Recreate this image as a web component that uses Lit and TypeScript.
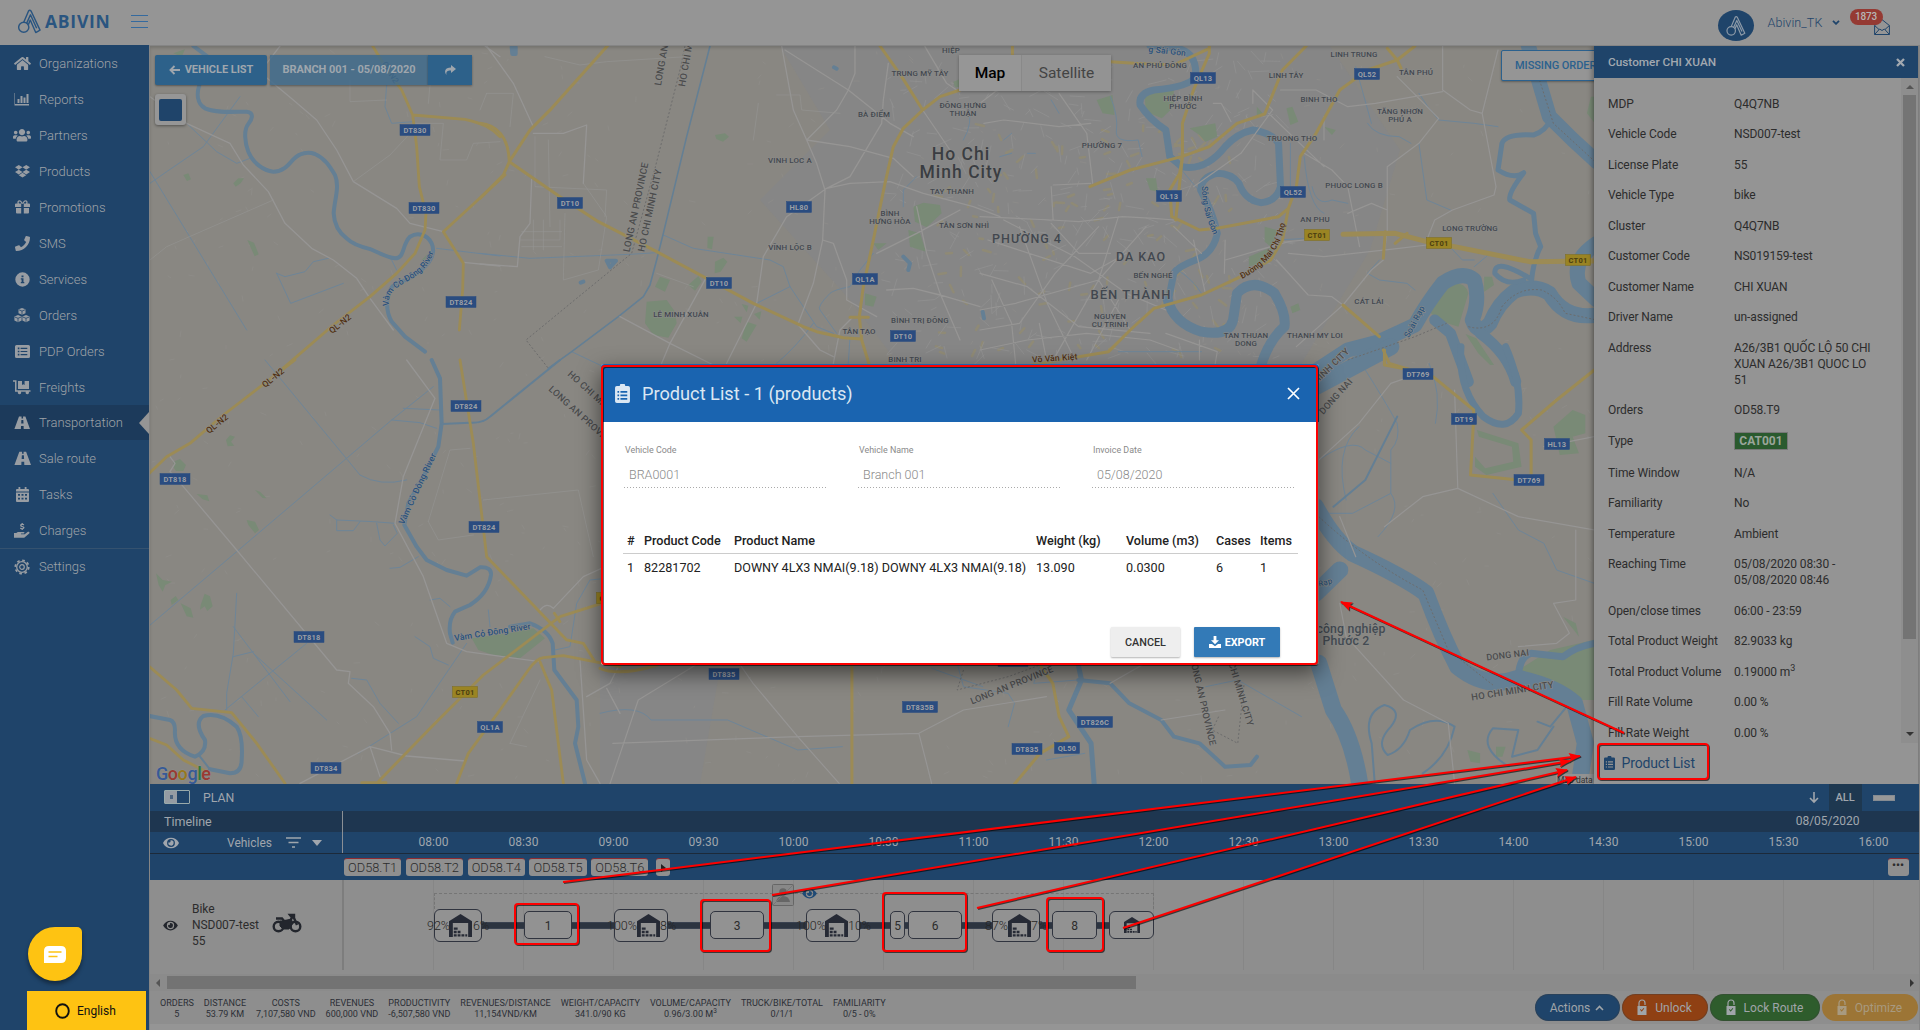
import { LitElement, html, svg, css, TemplateResult } from "lit";
import { customElement } from "lit/decorators.js";

/* ---------- icons ---------- */
const P = {
  home: "M280.37 148.26L96 300.11V464a16 16 0 0 0 16 16l112.06-.29a16 16 0 0 0 15.92-16V368a16 16 0 0 1 16-16h64a16 16 0 0 1 16 16v95.64a16 16 0 0 0 16 16.05L464 480a16 16 0 0 0 16-16V300L295.67 148.26a12.19 12.19 0 0 0-15.3 0zM571.6 251.47L488 182.56V44.05a12 12 0 0 0-12-12h-56a12 12 0 0 0-12 12v72.61L318.47 43a48 48 0 0 0-61 0L4.34 251.47a12 12 0 0 0-1.6 16.9l25.5 31A12 12 0 0 0 45.15 301l235.22-193.74a12.19 12.19 0 0 1 15.3 0L530.9 301a12 12 0 0 0 16.9-1.6l25.5-31a12 12 0 0 0-1.7-16.93z",
  users: "M96 224c35.3 0 64-28.7 64-64s-28.7-64-64-64-64 28.7-64 64 28.7 64 64 64zm448 0c35.3 0 64-28.7 64-64s-28.7-64-64-64-64 28.7-64 64 28.7 64 64 64zm32 32h-64c-17.6 0-33.5 7.1-45.1 18.6 40.3 22.1 68.9 62 75.1 109.4h66c17.7 0 32-14.3 32-32v-32c0-35.3-28.7-64-64-64zm-256 0c61.9 0 112-50.1 112-112S381.9 32 320 32 208 82.1 208 144s50.1 112 112 112zm76.8 32h-8.3c-20.8 10-43.9 16-68.5 16s-47.6-6-68.5-16h-8.3C179.6 288 128 339.6 128 403.2V432c0 26.5 21.5 48 48 48h288c26.5 0 48-21.5 48-48v-28.8c0-63.6-51.6-115.2-115.2-115.2zm-223.7-13.4C161.5 263.1 145.6 256 128 256H64c-35.3 0-64 28.7-64 64v32c0 17.7 14.3 32 32 32h65.9c6.3-47.4 34.9-87.3 75.2-109.4z",
  dropbox: "M264.4 116.3l-132 84.3 132 84.3-132 84.3L0 284.1l132.3-84.3L0 116.3 132.3 32l132.1 84.3zM131.6 395.7l132-84.3 132 84.3-132 84.3-132-84.3zm132.8-111.6l132-84.3-132-83.6L395.7 32 528 116.3l-132.3 84.3L528 284.8l-132.3 84.3-131.3-85z",
  phone: "M493.4 24.6l-104-24c-11.3-2.6-22.9 3.3-27.5 13.9l-48 112c-4.2 9.8-1.4 21.3 6.9 28l60.6 49.6c-36 76.7-98.9 140.5-177.2 177.2l-49.6-60.6c-6.8-8.3-18.2-11.1-28-6.9l-112 48C3.9 366.5-2 378.1.6 389.4l24 104C27.1 504.2 36.7 512 48 512c256.1 0 464-207.5 464-464 0-11.2-7.7-20.9-18.6-23.4z",
  eye: "M572.52 241.4C518.29 135.59 410.93 64 288 64S57.68 135.64 3.48 241.41a32.35 32.35 0 0 0 0 29.19C57.71 376.41 165.07 448 288 448s230.32-71.64 284.52-177.41a32.35 32.35 0 0 0 0-29.19zM288 400a144 144 0 1 1 144-144 143.93 143.93 0 0 1-144 144zm0-240a95.31 95.31 0 0 0-25.31 3.79 47.85 47.85 0 0 1-66.9 66.9A95.78 95.78 0 1 0 288 160z",
};

const pathIcon = (d: string, vb: string, w: number, h: number) =>
  html`<svg width=${w} height=${h} viewBox=${vb} fill="currentColor"><path d=${d} /></svg>`;
const box = (w: number, h: number, vb: string, body: unknown) =>
  html`<svg width=${w} height=${h} viewBox=${vb} fill="currentColor">${body}</svg>`;

const road = svg`<path fill-rule="evenodd" d="M5 2h2.6l-.1 2h1.6L9 2h2.4L16 14.5H9.700L9.600 11.500H7l-.1 3H.400zM7.400 5.500l-.2 3.500h2.300l-.2-3.500z"/>`;
const icons: Record<string, TemplateResult> = {
  home: pathIcon(P.home, "0 0 576 512", 17, 15),
  chart: box(16, 14, "0 0 16 14", svg`<path d="M1 1v11h14v1.500H.500V1zM3.500 7h2v4h-2zM6.500 4h2v7h-2zM9.500 5.500h2V11h-2zM12.500 2h2v9h-2z"/>`),
  users: pathIcon(P.users, "0 0 640 512", 18, 14.4),
  dropbox: pathIcon(P.dropbox, "0 0 528 512", 15, 14.500),
  gift: box(15, 14, "0 0 15 14", svg`<path d="M0 4.500Q0 3.500 1 3.500H2.600C1.800 1.500 3 .2 4.500.3 6 .4 7 2 7.500 3 8 2 9 .4 10.500.3 12 .2 13.200 1.500 12.400 3.500H14q1 0 1 1V7H8.800V3.700H6.200V7H0zM4 3.400h2.500C5.800 2 5 1.500 4.500 1.500 3.500 1.500 3.500 2.800 4 3.400zM8.500 3.400H11c.5-.6.5-1.900-.5-1.900-.5 0-1.300.5-2 1.900zM1 8h5.200v5.500H2q-1 0-1-1zM8.800 8H14v4.500q0 1-1 1H8.800z"/>`),
  phone: pathIcon(P.phone, "0 0 512 512", 15, 15),
  info: box(15, 15, "0 0 15 15", svg`<path fill-rule="evenodd" d="M7.500.3a7.200 7.200 0 1 1 0 14.400 7.200 7.200 0 0 1 0-14.400zM6.500 3.500v1.800h2V3.500zM5.800 6.200v1.200h.8V10h-.8v1.200h3.500V10h-.8V6.200z"/>`),
  boxes: box(16, 15, "0 0 16 15", svg`<path d="M8 0l3.500 1.300v3.900L8 6.700 4.500 5.200V1.300zM4 7.100l3.600 1.400v4L4 14.200.4 12.500v-4zM12 7.100l3.600 1.400v4L12 14.200l-3.600-1.700v-4z"/><path d="M4.800 1.700L8 3.100l3.200-1.400M8 3.100v3.500M.8 9L4 10.300 7.200 9M4 10.300V14M8.800 9l3.200 1.300L15.200 9M12 10.300V14" stroke="#1f446a" stroke-width=".8" fill="none"/>`),
  list: box(15, 13, "0 0 15 13", svg`<path fill-rule="evenodd" d="M1.500 0h12Q15 0 15 1.500v10q0 1.500-1.500 1.500h-12Q0 13 0 11.500v-10Q0 0 1.500 0zM2.800 2.600v1.600h1.600V2.600zM5.600 2.800v1.200h6.700V2.800zM2.800 5.700v1.600h1.600V5.700zM5.600 5.900v1.200h6.700V5.900zM2.800 8.800v1.600h1.600V8.800zM5.600 9v1.200h6.700V9z"/>`),
  dolly: box(18, 15, "0 0 18 15", svg`<path d="M0 .3h3.500v9.900H17.500v1.600h-1.700a1.700 1.700 0 1 1-3 0H8a1.700 1.700 0 1 1-3 0H2V1.800H0zM5 1h4v4l1.300-.8L11.600 5V1H16v8H5z"/>`),
  road1: box(16, 13, "0 1.500 16 13", road),
  road2: box(17, 16, "0 1.500 16 13", road),
  cal: box(13, 15, "0 0 13 15", svg`<path fill-rule="evenodd" d="M2.500 0h1.800v2h4.400V0h1.800v2H12q1 0 1 1v1.500H0V3q0-1 1-1h1.500zM0 5.500h13V14q0 1-1 1H1q-1 0-1-1zM2 7v1.800h2V7zm3.500 0v1.800h2V7zM9 7v1.800h2V7zM2 10.700v1.800h2v-1.800zm3.500 0v1.800h2v-1.800zm3.500 0v1.800h2v-1.800z"/>`),
  hand: box(16, 15, "0 0 16 15", svg`<path d="M7.600 0h1.200v.8c.7.1 1.100.4 1.500.8l-.8.8c-.6-.5-1.900-.6-1.900 0 0 .7 2.900.4 2.900 2.200 0 .8-.7 1.500-1.700 1.700V7H7.600v-.7c-.7-.1-1.400-.5-1.700-.9l.8-.8c.7.7 2.400.7 2.400 0S6.100 4.100 6.100 2.400c0-.8.6-1.400 1.500-1.600zM0 10h2.300l1.500-1.100H9.600c1.200 0 1.200 1.700 0 1.700H7v.6h3.700l2.900-2.200c1.200-.9 2.600.6 1.600 1.500l-4.400 3.700q-.6.500-1.300.5H0z"/>`),
  gear: box(16, 16, "0 0 16 16", svg`<circle cx="8" cy="8" r="5.300" fill="none" stroke="currentColor" stroke-width="1.300"/><circle cx="8" cy="8" r="6.700" fill="none" stroke="currentColor" stroke-width="1.800" stroke-dasharray="2.630 2.630"/><circle cx="8" cy="8" r="2.300" fill="none" stroke="currentColor" stroke-width="1.200"/>`),
  clip: box(11, 14, "0 0 11 14", svg`<path fill-rule="evenodd" d="M3.500 1.500a2 2 0 0 1 4 0H9.700Q11 1.500 11 2.800v9.900Q11 14 9.700 14H1.300Q0 14 0 12.700V2.800Q0 1.500 1.300 1.500zM1.800 5.200v1.200H3V5.200zM4 5.200v1.200h5V5.200zM1.800 7.800V9H3V7.800zM4 7.800V9h5V7.800zM1.800 10.400v1.200H3v-1.200zM4 10.400v1.200h5v-1.200z"/>`),
};

const mark = (c: string, w: number, h: number) => html`<svg width=${w} height=${h} viewBox="0 0 24 25" fill="none" stroke=${c} stroke-width="1.500" stroke-linejoin="round">
  <circle cx="6" cy="18.500" r="5.300"/><path d="M6 13.300L11 1.500q1.200-1.500 2.600 0L23 21.500l-4.500 2.500-5.700-13-2 5M9 14.500L13 5.500l6.500 14"/></svg>`;

/* ---------- shared base ---------- */
const base = css`
  :host { display: block; font-family: Roboto, "Liberation Sans", sans-serif; box-sizing: border-box; }
  *, *::before, *::after { box-sizing: border-box; }
  svg { display: block; flex: none; }
`;

/* ---------- top bar ---------- */
@customElement("top-bar")
class TopBar extends LitElement {
  static styles = [base, css`
    .bar { height: 45px; background: #959595; display: flex; align-items: center; padding: 0 30px 0 18px; color: #27507c; }
    .logo { display: flex; align-items: center; gap: 4px; width: 113px; margin-top: -3px; }
    .name { font: 700 17.500px "Open Sans", sans-serif; letter-spacing: .75px; color: #2a5580; }
    .burger { display: grid; gap: 5px; width: 17px; margin-top: -3px; }
    .burger i { height: 1px; background: #356a9e; }
    .grow { flex: 1; }
    .avatar { width: 36px; height: 31px; border-radius: 50%; background: #1f446a; display: grid; place-items: center; margin: 6px 14px 0 0; }
    .user { font-size: 12.500px; font-weight: 300; color: #1f446a; letter-spacing: .1px; display: flex; align-items: center; justify-content: space-between; width: 72px; margin-right: 10px; }
    .mail { display: grid; width: 41px; height: 26px; }
    .mail > * { grid-area: 1 / 1; }
    .badge { width: 33px; height: 16px; border-radius: 8px; background: #953a33; color: #b5b5b5; font-size: 10px; font-weight: 500; text-align: center; line-height: 16px; letter-spacing: -.2px; margin-top: -1px; z-index: 1; }
    .env { align-self: end; justify-self: end; margin: 0 1px 1px 0; }
  `];
  render() {
    return html`<div class="bar">
      <div class="logo">${mark("#2a5580", 23, 25)}<span class="name">ABIVIN</span></div>
      <div class="burger"><i></i><i></i><i></i></div>
      <div class="grow"></div>
      <div class="avatar">${mark("#8d9aa8", 20, 20)}</div>
      <div class="user">Abivin_TK<svg width="8" height="5" viewBox="0 0 8 5"><path d="M1 .8l3 3 3-3" fill="none" stroke="#1f446a" stroke-width="1.800"/></svg></div>
      <div class="mail"><svg class="env" width="16" height="16" viewBox="0 0 16 16" fill="none" stroke="#1f446a"><path d="M.6 6.500L8 .6l7.400 5.900v9H.6zM.6 6.500L5 10.500M15.400 6.500L11 10.500M.6 15.500l5-5.500 2.400 1.500 2.400-1.500 5 5.500"/></svg><span class="badge">1873</span></div>
    </div>`;
  }
}

/* ---------- side navigation ---------- */
const NAV: [string, string][] = [
  ["home", "Organizations"], ["chart", "Reports"], ["users", "Partners"], ["dropbox", "Products"],
  ["gift", "Promotions"], ["phone", "SMS"], ["info", "Services"], ["boxes", "Orders"], ["list", "PDP Orders"],
  ["dolly", "Freights"], ["road1", "Transportation"], ["road2", "Sale route"], ["cal", "Tasks"], ["hand", "Charges"], ["gear", "Settings"],
];

@customElement("side-nav")
class SideNav extends LitElement {
  static styles = [base, css`
    :host { background: #1f446a; color: #9fa3a8; display: flex; flex-direction: column; }
    .item { height: 36px; display: flex; align-items: center; font-size: 13px; font-weight: 300; }
    .ico { width: 39px; padding-left: 6px; display: grid; place-items: center; padding-right: 1px; color: #989da3; }
    .on { background: #1c3a5b; height: 35px; }
    .on::after { content: ""; margin-left: auto; border: 11px solid transparent; border-left: 0; border-right: 10px solid #959595; }
    .last { border-top: 1px solid #35526f; height: 36px; }
    .grow { flex: 1; }
    .chat { width: 54px; height: 54px; margin: 0 0 10px 28px; background: #fec312; border-radius: 50% 5px 50% 50%; display: grid; place-items: center; box-shadow: 0 3px 4px rgba(0,0,0,.4); }
    .lang { width: 119px; height: 39px; margin-left: 27px; background: #fec312; color: #111; font-size: 12px; display: flex; align-items: center; gap: 7px; padding-left: 28px; }
  `];
  render() {
    return html`${NAV.map(([i, t]) => html`<div class="item ${t === "Transportation" ? "on" : ""} ${t === "Settings" ? "last" : ""}"><span class="ico">${icons[i]}</span>${t}</div>`)}
      <div class="grow"></div>
      <div class="chat"><svg width="22" height="17" viewBox="0 0 22 17"><path d="M5 0h12q5 0 5 5v7q0 5-5 5H0V5q0-5 5-5z" fill="#fff"/><path d="M4.500 6h13M4.500 10.500h9" stroke="#fec312" stroke-width="1.600"/></svg></div>
      <div class="lang"><svg width="15" height="16" viewBox="0 0 15 16"><ellipse cx="7.500" cy="8" rx="6.300" ry="6.800" fill="none" stroke="#111" stroke-width="1.900"/></svg>English</div>`;
  }
}

/* ---------- map ---------- */
type Kind = "w" | "y" | "r" | "s" | "g" | "b";
interface Tile { t: string; p: [Kind, number, string][]; }
/* w = minor road, y = main road, r = water line, s = small stream, g = park area, b = boundary */
const TILES: Tile[] = [
  { t: "scale(.33333)", p: [
    ["s", 1, "M450 550L500 515 610 440 720 290M560 370L650 455 710 490 750 475M450 515L740 990M830 820L855 830 915 815 940 785 985 775M830 820L872 910 1030 850M1310 745L1500 768M1160 255L1155 320 1175 370 1240 365M1170 770L1190 810"],
    ["g", 0, "M550 525l15-5 8 18-12 5zM700 550l15-15 17 0-10 15-15 10zM742 720l20 8 14 35-12 6zM1265 780l25-25 10 15-20 30zM520 160l35-12-10 22z"],
    ["r", 4, "M580 138L650 190M598 255C590 280 590 310 615 325C650 340 700 335 740 335C765 338 755 360 745 372C730 390 735 430 745 455C760 490 790 512 820 515C850 515 865 495 880 478C900 458 925 455 945 462C975 475 990 500 1005 525C1020 560 1003 600 1001 640C1003 680 1020 700 1040 715C1060 735 1090 742 1110 747C1140 760 1160 772 1185 775C1215 775 1205 735 1230 710C1250 698 1280 700 1295 730C1320 790 1225 840 1190 850C1155 870 1155 930 1175 965L1215 1010 1275 1055"],
    ["w", 1.3, "M450 290L560 370 690 430 730 495 805 575 855 670 935 745 1000 780 1070 835 1110 895 1180 990M790 225L880 300 950 360 1010 450 1060 545 1190 625 1230 670 1330 695M1390 787L1500 798M840 138L800 190M1455 138L1500 170"],
    ["w", .6, "M450 780L500 740 820 600M1060 545L1170 465 1240 390M1245 370L1330 370 1320 480 1400 480 1420 430 1500 425M1050 240L1050 305 1160 300M1290 255L1285 310"],
    ["y", 2.8, "M1118 138L1165 215 1205 270 1238 345 1250 440 1258 560 1278 640 1275 690 1245 760 1190 820 1110 890 1000 975 820 1130M1238 345L1395 358C1450 370 1475 385 1500 410M1515 525L1330 695 1390 790 1388 870 1378 990"],
  ] },
  { t: "translate(140 360) scale(.33333)", p: [
    ["g", 0, "M995 835L1015 870 1060 885 1140 895 1215 835 1180 805 1100 820zM100 305l20-8 18 18-8 18-22 0-8-12zM170 402l32 4 6 18-20-6zM345 390l15 5 20 20-12-1zM320 480l25 5 12 25-12 10-20-25zM258 240l12-14 15 4-12 15 10 12-20 2zM182 735l12-34 16 8 8 30-16 14-8-14-14 10zM122 730l30 15 8 28-20-4zM92 720l15-12 8 12-20 15zM48 640l20 20 28 5-20 10-8 20-12-20z"],
    ["s", 1, "M375 0L660 345Q720 380 800 360M28 797L290 575 755 180 880 80M1260 0L1030 185M655 1180L830 1070 980 850M635 955L680 960 720 1030 775 1090M255 1050L500 850M290 700L280 880 260 1000 260 1050M280 800L450 1025M305 1010L355 1070M340 880L560 1080M280 890L340 875M570 465L590 480 700 485 765 490M590 480L590 512 640 512 660 485M710 490L720 540 735 558 772 520 760 495M825 830L870 860 880 895 925 915M750 625L780 622 835 590M870 720L900 715 930 740M1045 750L1050 800M755 180L840 188 890 205M790 145L900 150M1400 655L1350 660 1310 730 1290 860 1245 870"],
    ["r", 4, "M875 0L900 55 905 190 895 260 850 350 805 430 793 495 830 560 860 600 920 630 980 647 1020 622Q1055 620 1053 645Q1045 700 990 735L945 755Q925 780 930 820L938 848M1110 800L1170 790Q1225 810 1238 850L1243 930 1310 1020 1315 1100 1305 1150 1335 1270M28 1068L90 1080Q105 1085 105 1110Q100 1170 165 1190Q200 1175 195 1140Q160 1090 190 1068Q240 1055 290 1100Q310 1130 305 1200Q305 1240 270 1240L210 1228"],
    ["r", 2, "M905 192L990 188Q1030 190 1050 170L1260 0M180 1190L210 1228"],
    ["w", 1.3, "M800 0L885 115 790 350 765 490 850 650 920 850 980 875 1200 905M90 290L105 310 90 335 130 380 290 570 590 930 630 935 625 970 700 1040 750 1120 755 1170M480 1270L690 1160 800 1188 975 1203M690 1160L720 1250M1200 750Q1220 725 1240 745L1330 650 1440 600M1320 900L1340 1200 1380 1270M1340 1010L1410 970 1440 910M1400 985L1440 1060"],
    ["w", .6, "M865 485L930 270 990 265M865 485L895 540 1000 525M1030 420L1315 390 1360 590M1110 1150L1200 960M1110 1150L1160 1160"],
    ["y", 2.8, "M465 0L250 165 150 250 80 290 28 340M960 0L1000 250 1040 590 1160 715 1280 840 1330 850 1365 905M1440 715L1385 730 1260 770 1030 945 880 1095 715 1265M950 1270L985 1180 1080 1050 1165 930Q1190 895 1210 893L1270 887 1390 910 1440 920M1200 905L1235 990 1270 1270M28 920L110 990 155 1045 275 1058 350 1150 435 1270M28 1135L80 1155 130 1200 200 1235M1243 760L1260 785M665 1268H738"],
  ] },
  { t: "translate(480 40) scale(.33333)", p: [
    ["g", 0, "M500 785L560 780 585 815 590 850 565 893 520 885 495 850zM540 710L570 720 555 755 525 740zM625 735L655 708 665 725 645 752zM705 285l30-5 12 10-18 15-20-8zM705 665l25-12 12 12-20 30-18 5zM785 895l15-50 30 10-30 50zM762 830l25 0-5 20zM785 792l20 5-5 20zM822 822l22-8-5 25zM683 590l18 0-5 38-14-4zM1300 500L1330 488 1380 495 1385 520 1340 562 1305 545zM1285 570L1320 580 1338 635 1290 620zM1155 760l35 10-10 30-25-5zM1420 125l20-8 0 25-15 0zM1180 610l40 0-25 20z"],
    ["s", 1, "M0 640L150 655 450 643 530 638M550 585L640 625 870 660 910 680 930 740 1010 860 1060 880M830 790L930 740M275 935L370 980M1180 640L1140 690 1110 740Q1060 750 1050 760Q1010 800 1020 810L1070 880M1000 850Q950 920 890 970M1270 500L1270 450 1310 410M1465 200Q1480 250 1450 300M1110 890L1105 970"],
    ["r", 1.600, "M690 18L620 290 550 580 530 660 510 735 490 770 415 830 275 935 205 985"],
    ["r", 4, "M95 22h12v20h-10zM380 662l28 0-18 20zM1270 650l20 20-5 20M1508 815l4 20M1062 82l8 4M302 728l8-3"],
    ["b", 1, "M615 18L600 90 525 385 455 640 290 775 138 900 205 985"],
    ["w", 1.300, "M905 18L940 210 980 300 1010 370 1035 450 1028 600 1000 730 955 850M1125 18L1125 100 1105 150 1070 210 980 300M915 30L1105 150 1230 250 1300 290M980 300L1110 320 1240 355 1300 410M1040 445L1110 430 1230 425 1330 460 1480 500 1560 530M1040 445L920 530 850 650 830 790 740 970M1225 70L1210 180 1205 250 1110 410 1040 445M1028 600L1060 610 1100 720 1100 780 1190 830M1328 210L1410 330M1335 20L1400 130 1430 150M1190 640L1310 580 1440 510M1310 500L1340 640 1380 760 1440 900M680 710L570 910 545 970M420 830L570 910 700 975M1220 750L1300 745 1380 765 1500 800M1115 835L1080 870 1060 970M20 18L100 130 160 260M160 280L250 280 320 255 310 430M155 415L150 550 120 590 112 680 0 672M955 855L1020 930 1060 950"],
    ["w", .6, "M165 290L165 440 380 450 375 530M205 300L210 560M120 600H240V540M125 575H245M125 620H245M160 540V630M190 540V630M310 430L380 530 355 690 250 720 255 520M835 190L820 300M890 165L960 165 965 210 1080 220M20 160L100 160 90 260M0 210L20 160M195 50L300 75 380 65 620 50M530 700L640 740"],
    ["y", 3, "M382 18L215 205 150 270 88 365 70 405 0 475M88 365L240 470 355 545 530 635 820 790 970 860 1010 875 1090 893 1145 897M0 250C50 255 85 290 88 365M1200 18L1265 110 1328 210M1440 150L1380 170 1328 210 1270 265 1240 320 1215 430 1180 600 1150 740 1138 830 1145 900 1168 975M1110 832H1165"],
  ] },
  { t: "translate(980 40) scale(.39541 .33333)", p: [
    ["g", 0, "M415 160L490 150 490 200 460 235 420 215zM295 180l40-15 5 60-30-5zM530 265l65-15 5 40-30 15-15-20zM775 205l15-5 15 45-20 10zM700 200l15 20-15 15zM870 260l30 10-10 15zM720 560l30 10-10 55-20-20zM680 650l60-30-10 40-50 20zM785 800l20-10 5 20-20 10zM420 415l25 0 5 40-20-5zM1275 710l20 0 5 25-25 20zM1545 170l10 0 0 80-20-30z"],
    ["s", 1, "M330 170Q350 230 345 270T400 300L410 350M1110 160Q1130 200 1160 240L1250 250 1310 260M980 250Q1000 290 1060 290L1090 310M1110 310L1130 480 1190 510M840 440Q850 500 890 480L930 490M750 600L830 595M1010 660L980 700 1010 720 1080 730 1100 750M1250 680L1290 640M510 390L560 460M785 310V440M350 935H560M1180 610L1220 660 1250 660M820 350Q830 500 870 520M500 690Q540 720 560 760M950 80L990 250M180 180L200 220M60 300l20-20M50 350l30-10M120 340l20 0"],
    ["r", 7, "M430 16L500 25Q550 40 545 110Q530 140 440 150Q400 160 405 195Q430 240 470 270L480 350 510 380Q570 395 620 320Q650 280 690 270Q740 280 755 310L760 440Q750 485 710 488Q670 480 655 430Q635 400 600 400Q560 410 558 450Q590 520 600 580Q590 640 545 660Q500 680 490 700L475 790"],
    ["r", 10, "M475 780Q490 850 560 875Q630 890 640 840L650 760Q690 710 745 760Q775 820 770 860Q730 900 710 980"],
    ["r", 15, "M840 1000L930 930 1010 905 1100 855Q1130 790 1170 730Q1220 690 1250 720Q1265 780 1245 840Q1260 890 1290 850Q1310 790 1350 755Q1400 730 1440 760Q1480 840 1560 825M1385 10L1410 110 1440 230 1500 300 1560 365M1560 610Q1495 660 1515 730L1560 780"],
    ["r", 11, "M1150 840L1190 880 1235 1025M1265 880Q1335 940 1355 1025"],
    ["r", 5, "M1445 235Q1430 275 1400 285Q1330 280 1320 310L1310 390Q1350 420 1375 398Q1335 460 1340 480L1400 520 1405 580 1418 620Q1400 660 1395 720M1395 718Q1300 650 1302 700Q1330 740 1375 720"],
    ["g", 0, "M1140 820L1160 770 1190 730Q1228 725 1235 760L1210 860Q1170 850 1140 820zM1228 882L1255 895 1300 975 1290 975 1260 940z"],
    ["b", 1, "M930 960L1100 890 1180 850M1235 860Q1300 880 1320 800 1360 740 1420 750 1460 770 1480 820L1560 840M1415 120L1450 250 1560 370"],
    ["w", 1.200, "M0 530L180 540 250 545 360 530 440 535 490 540M60 240L200 260 280 250M200 160L270 280 285 430M180 440L185 540M590 190L610 190 635 245M740 210L690 150 690 190M760 150L850 150 930 200 1000 190 1170 155M1055 110L1160 235 1110 310 1030 380 1030 570 1020 660 990 690 918 795 800 920M780 640L870 650 1060 625 1130 615M620 660L780 605 820 600M750 660L830 765 890 770 918 795M1130 600L1150 540 1195 510 1300 465 1305 440 1270 220 1310 30M1170 18L1170 150 1240 210 1270 220M820 340L890 390 930 440 960 620M1030 510L990 490 930 520M540 600L570 760M620 600L618 700M540 440L660 340 740 210M0 190L110 90M10 250L60 240M20 600L150 650 280 700 370 640M280 430L185 435M350 530L300 720 190 950M100 560L170 790 240 960M0 810L90 790 300 720 330 680 420 560M0 700L120 740 250 860 430 880M60 540L240 650 370 760 470 810M0 930L120 900 270 880 430 900M180 550L250 640 330 640M300 720L380 870M0 870L100 850 190 700 300 560M90 970L80 850 30 720M170 970L150 850M430 900L500 930M470 880L600 935 595 970M555 900V960M350 780L270 960M490 560L560 640M730 220L870 380M870 230L870 300"],
    ["y", 3, "M580 16L580 40 540 150 512 250 512 350 505 400 480 450 485 530 555 570 600 565 755 530 780 505 800 440 810 350 850 280 910 150 980 90 1055 60 1100 18M278 440L380 390 510 350 580 320 650 250 720 222 765 90 825 18M330 65L390 70 490 75 580 25M1030 25L1055 60 1065 85M512 350L495 540M780 505L765 600 735 660 650 715 560 765 440 805 380 870 325 935 250 950 130 975M918 795L1010 890M1020 930L1035 970 1090 990M1025 575L1020 655M1050 610L1080 580M82 18V50"],
    ["y", 5, "M918 583L1050 580 1130 605 1200 620 1390 665 1560 663"],
  ] },
  { t: "translate(600 350) scale(.63776 .33333)", p: [
    ["g", 0, "M1440 960L1490 900 1559 870 1559 1050 1530 1050 1500 1010zM1375 240L1440 280 1445 350 1390 375 1372 350 1372 320 1388 355 1432 335 1430 290 1378 260zM1495 230l30-50 20 15 0 55-20 10 10 50-30 5zM1510 800l20 20 5 40-8-20zM1360 1200l20 10 0 30-15-5zM1405 1190l15 0-5 30-10 0z"],
    ["s", 1, "M0 1090Q60 1060 80 1110L200 1110 310 1200 380 1190M560 940L570 1010 640 1030 650 1060 640 1130M520 955L600 1010M690 945L680 1000 750 990M1127 330Q1180 260 1200 300L1240 340M1200 60Q1230 150 1250 220Q1255 270 1240 300L1240 430 1180 490 1130 490M1240 430Q1260 480 1220 560M1300 40Q1320 130 1310 220M1190 230Q1150 300 1170 450M1559 700L1500 660 1480 580 1440 540 1400 430M950 1010L1000 990 1100 1100M760 1210L700 1230"],
    ["r", 2, "M1215 1305L1210 1180Q1195 1090 1230 1065 1260 1080 1240 1130 1215 1180 1235 1215 1260 1200 1270 1140 1310 1090 1340 1130 1330 1220 1290 1270M1520 1060L1490 1130 1470 1115M1425 1250Q1375 1190 1400 1135L1440 1140 1430 1220 1470 1200 1495 1130M1250 200L1200 390 1150 470"],
    ["r", 5, "M750 945L755 990 735 1080 770 1180 775 1305"],
    ["r", 4, "M750 990L800 1000 830 1060 880 1110 900 1160 940 1180 980 1250 1020 1245 1030 1220"],
    ["r", 7, "M1350 -10Q1345 120 1385 200Q1420 250 1440 190Q1445 100 1420 -10M1440 990Q1440 920 1460 910L1510 920Q1530 890 1559 880"],
    ["r", 17, "M1122 470Q1150 570 1180 610Q1260 680 1295 730Q1320 860 1345 950Q1390 1020 1440 985Q1500 1010 1528 1060L1545 1180 1535 1310M1122 730L1160 660M1127 940L1150 1080Q1180 1160 1192 1310M1240 -10L1122 110"],
    ["b", 1, "M1127 500Q1200 630 1290 720L1330 900 1400 1005M570 960L560 1020 640 980 690 945M970 1100L960 1140 1000 1180 1010 1000"],
    ["w", 1.200, "M15 1305L60 1050 150 945M310 1160L20 1180M310 1160L375 1300M310 1160L500 1150 570 1080 700 1040M220 945L240 1000 310 1160M1127 330L1190 220 1240 100 1300 60M1160 500L1185 620M1160 760L1170 860 1260 1050 1330 1120 1340 1300M1230 530L1290 440 1345 415 1440 500 1559 540M1340 120L1345 415M1530 540L1530 750 1495 760 1520 850 1500 880 1440 890M1480 290L1559 260M500 1150L520 1300M800 1000L850 945M880 1110L980 1080"],
    ["y", 3, "M1230 0L1230 45 1300 70 1370 180 1370 200 1365 375 1440 390 1460 375 1460 270 1445 240 1500 150 1559 60M395 945V1302M0 955Q30 980 90 945M690 945L710 1000 720 1100 735 1160 690 1210 650 1302"],
  ] },
];

type Label = [number, number, string, number?, number?, string?, string?];
const LABELS: Label[] = [
  [951, 53, "HIỆP"], [920, 76, "TRUNG MỸ TÂY"], [874, 117, "BÀ ĐIỂM"], [963, 108, "ĐÔNG HƯNG"], [963, 116, "THUẬN"],
  [790, 163, "VINH LOC A"], [961, 160, "Ho Chi", 17.5, 0, "#3a3d42"], [961, 177.5, "Minh City", 17.5, 0, "#3a3d42"], [952, 194, "TAY THANH"],
  [890, 216, "BÌNH"], [890, 224, "HƯNG HÒA"], [964, 228, "TÂN SƠN NHÌ"], [790, 250, "VĨNH LỘC B"], [681, 317, "LÊ MINH XUÂN"],
  [920, 323, "BÌNH TRỊ ĐÔNG"], [859, 334, "TÂN TẠO"], [905, 362, "BINH TRI"], [1160, 68, "AN PHÚ ĐÔNG"], [1354, 57, "LINH TRUNG"],
  [1286, 78, "LINH TÂY"], [1416, 75, "TÂN PHÚ"], [1183, 101, "HIỆP BÌNH"], [1183, 109, "PHƯỚC"], [1319, 102, "BINH THO"],
  [1400, 114, "TĂNG NHƠN"], [1400, 122, "PHÚ A"], [1102, 148, "PHƯỜNG 7"], [1292, 141, "TRUONG THO"], [1354, 188, "PHUOC LONG B"],
  [1315, 222, "AN PHU"], [1470, 231, "LONG TRƯỜNG"], [1027, 243, "PHƯỜNG 4", 12.5], [1141, 261, "DA KAO", 12.5], [1153, 278, "BẾN NGHÉ"],
  [1131, 299, "BẾN THÀNH", 13], [1110, 319, "NGUYEN"], [1110, 327, "CU TRINH"], [1369, 304, "CÁT LÁI"], [1246, 338, "TAN THUAN"],
  [1246, 346, "DONG"], [1315, 338, "THANH MY LOI"], [1508, 658, "DONG NAI", 9, -7, "#4c4c4c"], [1513, 694, "HO CHI MINH CITY", 9.5, -9, "#4c4c4c"],
  [1013, 688, "LONG AN PROVINCE", 9.3, -22, "#4c4c4c"], [1200, 703, "LONG AN PROVINCE", 9.3, 77, "#4c4c4c"],
  [1238, 695, "CHI MINH CITY", 9.3, 73, "#4c4c4c"], [1351, 633, "công nghiệp", 12.3, 0, "#444b52"], [1346, 645, "Phước 2", 12.3, 0, "#444b52"],
  [1326, 585, "Rạp", 8, -15, "#2d567e"], [639, 208, "LONG AN PROVINCE", 9.6, -78, "#4c4c4c"], [653, 211, "HO CHI MINH CITY", 9.6, -78, "#4c4c4c"],
  [567, 375, "HO CHI MINH CITY", 9.5, 42, "#4c4c4c", "start"], [548, 390, "LONG AN PROVINCE", 9.5, 42, "#4c4c4c", "start"],
  [661, 86, "LONG AN", 9.6, -80, "#4c4c4c", "start"], [685, 87, "HO CHI M", 9.6, -80, "#4c4c4c", "start"],
  [1350, 352, "HO CHI MINH CITY", 9.3, -44, "#4c4c4c", "end"], [1353, 382, "DONG NAI", 9.3, -48, "#4c4c4c", "end"],
  [420, 490, "Vàm Cỏ Đông River", 8.7, -65, "#28517e"], [493, 635, "Vàm Cỏ Đông River", 8.7, -9, "#28517e"],
  [1417, 323, "Soài Rạp", 8.5, -62, "#2d567e"], [1167, 54, "g Sài Gòn", 8.5, 6, "#28517e"],
  [342, 326, "QL-N2", 8.7, -39, "#513010"], [275, 380, "QL-N2", 8.7, -39, "#513010"], [219, 426, "QL-N2", 8.7, -39, "#513010"],
  [388, 74, "QL N2", 8.5, 58, "#4a5560"], [1055, 361, "Võ Văn Kiệt", 8.5, -4, "#513010"],
];
type Shield = [number, number, string, boolean?];
const SHIELDS: Shield[] = [
  [570, 203, "DT10"], [719, 283, "DT10"], [799, 207, "HL80"], [865, 279, "QL1A"], [903, 336, "DT10"], [1203, 78, "QL13"], [1169, 196, "QL13"],
  [1367, 74, "QL52"], [1293, 192, "QL52"], [1418, 374, "DT769"], [1317, 235, "CT01", true], [1439, 243, "CT01", true], [1578, 260, "CT01", true],
  [1464, 419, "DT19"], [1557, 444, "HL13"], [1529, 480, "DT769"], [724, 674, "DT835"], [920, 707, "DT835B"], [1095, 722, "DT826C"],
  [1027, 749, "DT835"], [1067, 748, "QL50"], [175, 479, "DT818"], [466, 406, "DT824"], [484, 527, "DT824"], [309, 637, "DT818"],
  [465, 692, "CT01", true], [490, 727, "QL1A"], [326, 768, "DT834"], [415, 130, "DT830"], [424, 208, "DT830"], [461, 302, "DT824"], [609, 598, "CT01", true], [1013, 661, "DT826"],
];

/* Scattered side streets; the seed keeps every render identical. */
const streets = (() => {
  let s = 77;
  const r = () => ((s = (s * 16807) % 2147483647) / 2147483647);
  let town = "", rural = "", amber = "";
  for (let i = 0; i < 330; i++) {
    const x = 890 + r() * 390, y = 60 + r() * 300, a = r() * 6.28, l = 5 + r() * 14;
    town += `M${x.toFixed(0)} ${y.toFixed(0)}l${(Math.cos(a) * l).toFixed(1)} ${(Math.sin(a) * l).toFixed(1)}`;
  }
  for (let i = 0; i < 650; i++) {
    const x = 150 + r() * 1440, y = 50 + r() * 730, a = r() * 6.28, l = 2 + r() * 4;
    rural += `M${x.toFixed(0)} ${y.toFixed(0)}l${(Math.cos(a) * l).toFixed(1)} ${(Math.sin(a) * l).toFixed(1)}`;
  }
  for (let i = 0; i < 120; i++) {
    const x = 940 + r() * 290, y = 120 + r() * 235, a = r() * 6.28, l = 3 + r() * 6;
    amber += `M${x.toFixed(0)} ${y.toFixed(0)}l${(Math.cos(a) * l).toFixed(1)} ${(Math.sin(a) * l).toFixed(1)}`;
  }
  return { town, rural, amber };
})();

@customElement("city-map")
class CityMap extends LitElement {
  static styles = [base, css`
    :host { background: #898782; overflow: hidden; }
    path { fill: none; vector-effect: non-scaling-stroke; stroke-linejoin: round; stroke-linecap: round; }
    .w { stroke: #969594; }
    .y { stroke: #9c8b55; }
    .r { stroke: #647f94; }
    .s { stroke: #6e8598; }
    .g { fill: #798a76; stroke: none; }
    .b { stroke: #6c6c6c; stroke-dasharray: 2 2; stroke-linecap: butt; }
    .urban { fill: #868686; }
    .street { stroke: #929292; stroke-width: .7; }
    .lane { stroke: #908f8b; stroke-width: .6; }
    .amber { stroke: #8f8a76; stroke-width: 2.5; }
    .lbl { font-weight: 500; paint-order: stroke; stroke: #8b8b89; stroke-width: 1.2px; }
    .tag { font-size: 7.5px; font-weight: 700; letter-spacing: .2px; fill: #9c9fa4; }
    .dark { fill: #4a3e10; }
    .logo { font-size: 18px; font-weight: 500; stroke: #8f8f8f; stroke-width: .8px; paint-order: stroke; }
  `];
  render() {
    const order: Kind[] = ["g", "s", "r", "b", "w", "y"];
    return html`<svg width="1444" height="738" viewBox="150 46 1444 738">
      <path class="urban" d="M780 46H1330L1400 150 1370 250 1300 366H900L850 300 760 200 830 130zM600 668H720L700 784H600z"/>
      <path class="lane" d=${streets.rural}/><path class="amber" d=${streets.amber}/><path class="street" d=${streets.town}/>
      ${order.map(k => TILES.map(t => svg`<g transform=${t.t}>${t.p.filter(p => p[0] === k).map(p => svg`<path class=${k} stroke-width=${p[1]} d=${p[2]}/>`)}</g>`))}
      ${LABELS.map(([x, y, t, size = 7.9, rot = 0, fill = "#42474f", anchor = "middle"]) =>
        svg`<text class="lbl" transform="translate(${x} ${y}) rotate(${rot})" font-size=${size} fill=${fill} text-anchor=${anchor} letter-spacing=${size > 10 && fill !== "#444b52" ? 1 : .15}>${t}</text>`)}
      <path id="va" d="M389 306C386 278 425 288 435 248"/><path id="mct" d="M1242 279Q1282 258 1286 218"/><path id="ssg" d="M1202 186Q1201 210 1215 238"/>
      <text class="lbl" font-size="8.5" fill="#28517e"><textPath href="#va">Vàm Cỏ Đông River</textPath></text>
      <text class="lbl" font-size="8.5" fill="#513010"><textPath href="#mct">Đường Mai Chí Thọ</textPath></text>
      <text class="lbl" font-size="8.5" fill="#28517e"><textPath href="#ssg">Sông Sài Gòn</textPath></text>
      ${SHIELDS.map(([x, y, t, amber]) => {
        const w = t.length * 5 + 5;
        return svg`<rect x=${x - w / 2} y=${y - 5.5} width=${w} height="11" fill=${amber ? "#9a8423" : "#2a4c80"} stroke=${amber ? "#7d6c20" : "#2a4c80"} stroke-width=".5"/><text class="tag ${amber ? "dark" : ""}" x=${x} y=${y + 2.800} text-anchor="middle">${t}</text>`;
      })}
      <text class="logo" x="156" y="780" textLength="55"><tspan fill="#365a97">G</tspan><tspan fill="#9a3a32">o</tspan><tspan fill="#98781c">o</tspan><tspan fill="#365a97">g</tspan><tspan fill="#2d7a40">l</tspan><tspan fill="#9a3a32">e</tspan></text>
      <rect x="1556" y="774" width="38" height="10" fill="#929292"/><text x="1557" y="783" font-size="8.500" fill="#333">Map data</text>
    </svg>`;
  }
}

/* ---------- customer panel ---------- */
const INFO: [string, unknown][] = [
  ["MDP", "Q4Q7NB"], ["Vehicle Code", "NSD007-test"], ["License Plate", "55"], ["Vehicle Type", "bike"], ["Cluster", "Q4Q7NB"],
  ["Customer Code", "NS019159-test"], ["Customer Name", "CHI XUAN"], ["Driver Name", "un-assigned"],
  ["Address", html`A26/3B1 QUỐC LỘ 50 CHI<br>XUAN A26/3B1 QUOC LO<br>51`], ["Orders", "OD58.T9"], ["Type", html`<b class="cat">CAT001</b>`],
  ["Time Window", "N/A"], ["Familiarity", "No"], ["Temperature", "Ambient"], ["Reaching Time", html`05/08/2020 08:30 -<br>05/08/2020 08:46`],
  ["Open/close times", "06:00 - 23:59"], ["Total Product Weight", "82.9033 kg"], ["Total Product Volume", html`0.19000 m<sup>3</sup>`],
  ["Fill Rate Volume", "0.00 %"], ["Fill Rate Weight", "0.00 %"],
];

@customElement("customer-panel")
class CustomerPanel extends LitElement {
  static styles = [base, css`
    :host { background: #949494; display: flex; flex-direction: column; box-shadow: -2px 0 5px rgba(0,0,0,.3); z-index: 1; }
    .head { height: 32px; flex: none; background: #1f446a; color: #a3a9b0; display: flex; align-items: center; justify-content: space-between; padding: 0 13px 0 14px; font-size: 11.800px; font-weight: 500; }
    .body { height: 665px; display: flex; overflow: hidden; }
    .rows { flex: 1; padding-top: 10.600px; color: #2c2c2c; font-size: 12px; letter-spacing: -.1px; line-height: 16px; overflow: hidden; }
    .row { display: grid; grid-template-columns: 126px 1fr; padding: 7.250px 0 7.250px 14px; }
    sup { font-size: 9px; line-height: 0; }
    .cat { display: block; width: 54px; height: 18px; margin: -.5px 0 0; background: #2a5a2e; border: 1px solid #777; color: #9aa59a; font-size: 12px; text-align: center; line-height: 17px; letter-spacing: 0; }
    .bar { width: 17px; background: #8e8e8e; display: flex; flex-direction: column; align-items: center; }
    .up { border: 4px solid transparent; border-top: 0; border-bottom-color: #555; margin: 7px 0 6px; }
    .thumb { width: 13px; height: 544px; background: #747474; }
    .down { border: 4px solid transparent; border-bottom: 0; border-top-color: #333; margin-top: auto; margin-bottom: 7px; }
    .foot { flex: 1; display: flex; align-items: center; gap: 7px; padding: 0 0 2px 9.500px; color: #1f446a; font-size: 14px; letter-spacing: -.15px; }
  `];
  render() {
    return html`<div class="head">Customer CHI XUAN<svg width="9" height="9" viewBox="0 0 9 9"><path d="M1 1l7 7M8 1L1 8" stroke="#a3a9b0" stroke-width="2.300"/></svg></div>
      <div class="body"><div class="rows">${INFO.map(([k, v]) => html`<div class="row"><span>${k}</span><span>${v}</span></div>`)}</div>
      <div class="bar"><i class="up"></i><i class="thumb"></i><i class="down"></i></div></div>
      <div class="foot">${icons.clip}<span>Product List</span></div>`;
  }
}

/* ---------- timeline ---------- */
const warehouse = (w: number) => html`<svg width=${w} height=${w} viewBox="0 0 24 24"><path d="M0 7.500L12 0l12 7.500V24h-4V9.500H4V24H0z" fill="#262a35"/><path d="M5 14h4v2.500h-4zM5 17.500h3v2.500h-3zM9 17.500h3v2.500H9zM5 21h3v2.500H5zM9 21h3v2.500H9zM13 21h3v2.500h-3zM17 21h2v2.500h-2z" fill="#262a35"/></svg>`;
const STOPS: { x: number; w: number; n?: string; l?: [number, string]; r?: [number, string]; ix?: number; end?: boolean }[] = [
  { x: 434, w: 48, ix: 449, l: [427, "92%"], r: [473, "6%"] }, { x: 524, w: 48, n: "1" },
  { x: 614, w: 54, ix: 637, l: [607, "100%"], r: [660, "8%"] }, { x: 710, w: 54, n: "3" },
  { x: 806, w: 54, ix: 825, l: [796, "100%"], r: [848, "10%"] }, { x: 890, w: 15, n: "5" }, { x: 908, w: 54, n: "6" },
  { x: 992, w: 48, ix: 1008, l: [985, "87%"], r: [1031, "7%"] }, { x: 1052, w: 45, n: "8" }, { x: 1109, w: 45, ix: 1124, end: true },
];
const HOURS = ["08:00", "08:30", "09:00", "09:30", "10:00", "10:30", "11:00", "11:30", "12:00", "12:30", "13:00", "13:30", "14:00", "14:30", "15:00", "15:30", "16:00"];
const STATS: [string, unknown][] = [
  ["ORDERS", "5"], ["DISTANCE", "53.79 KM"], ["COSTS", "7,107,580 VND"], ["REVENUES", "600,000 VND"], ["PRODUCTIVITY", "-6,507,580 VND"],
  ["REVENUES/DISTANCE", "11,154VND/KM"], ["WEIGHT/CAPACITY", "341.0/90 KG"], ["VOLUME/CAPACITY", html`0.96/3.00 M<sup>3</sup>`], ["TRUCK/BIKE/TOTAL", "0/1/1"], ["FAMILIARITY", "0/5 - 0%"],
];
const lock = html`<svg width="10" height="17" viewBox="0 0 10 17"><path d="M2 7V4a3 3 0 0 1 6 0v2" fill="none" stroke="currentColor" stroke-width="1.200"/><path fill-rule="evenodd" d="M.5 7h9v9h-9zM3 10.800l1.700 2 2.600-3.300-.8-.5-1.800 2.300-1-1.200z" fill="currentColor"/></svg>`;

@customElement("plan-board")
class PlanBoard extends LitElement {
  static styles = [base, css`
    :host { background: #8e8e8e; color: #a0a6ad; display: flex; flex-direction: column; font-size: 12px; }
    .plan { height: 27px; background: #1f446a; display: flex; align-items: center; padding-left: 14px; font-size: 12.300px; flex: none; }
    .switch { width: 26px; height: 14px; border: 1px solid #9aa; border-radius: 1px; background: linear-gradient(90deg, #959ca3 52%, #1f446a 52%); display: flex; align-items: center; padding-left: 5px; margin: -2px 13px 0 0; }
    .switch i { width: 3px; height: 4px; background: #4a6480; }
    .all { margin-left: 9px; width: 33px; height: 27px; background: #1e3850; display: grid; place-items: center; font-size: 11px; font-weight: 500; }
    .min { width: 22px; height: 6px; background: #989898; border: 1px solid #858b92; margin: 0 24px 0 11px; }
    .grow { flex: 1; }
    .date { height: 21px; background: #1e3650; display: grid; grid-template-columns: 192px 1fr; align-items: center; flex: none; }
    .date > span { padding-left: 14px; font-size: 12.500px; }
    .day { border-left: 1px solid #8a8f95; height: 21px; line-height: 20px; text-align: right; padding-right: 59px; }
    .hours { height: 22px; background: #1f446a; border-bottom: 1px solid #1c2a3a; display: grid; grid-template-columns: 192px 1fr; flex: none; }
    .left { display: flex; align-items: center; padding-left: 13px; }
    .veh { margin: 0 14px 0 48px; }
    .caret { border: 5px solid transparent; border-top: 6px solid #a0a6ad; border-bottom: 0; margin-left: 11px; }
    .ticks { display: flex; padding-left: 45.500px; border-left: 1px solid #8a8f95; }
    .ticks span { width: 90px; text-align: center; line-height: 21px; flex: none; }
    .chips { height: 26px; background: #1f446a; display: flex; align-items: center; gap: 4.500px; padding: 0 10px 0 194px; flex: none; }
    .chip { height: 18px; width: 57.300px; border-radius: 3px; background: #8f8f8f; border-top: 1px solid #8e2b31; color: #2c2c2c; font-size: 12.800px; font-weight: 300; line-height: 17px; text-align: center; }
    .next { width: 14px; margin-left: 3.500px; display: grid; place-items: center; }
    .next i { border: 4px solid transparent; border-left: 5px solid #222; border-right: 0; }
    .more { width: 21px; font-weight: 700; font-size: 11px; letter-spacing: 0; line-height: 14px; }
    .lane { position: relative; height: 90px; flex: none; }
    .lane > * { position: absolute; }
    .meta { left: 42px; top: 21px; line-height: 16px; color: #2c2c2c; letter-spacing: -.05px; }
    .eye { left: 13px; top: 39px; color: #23262d; }
    .moto { left: 122px; top: 33px; }
    .col { left: 192px; top: 0; width: 2px; height: 90px; background: #7d7d7d; }
    .grid { left: 283px; top: 0; width: 1441px; height: 90px; background: repeating-linear-gradient(90deg, #868686 0 1px, transparent 1px 90px); }
    .dash { left: 284px; top: 13px; width: 720px; height: 16px; border: 1px dashed #757575; border-bottom: 0; }
    .line { left: 310px; top: 42px; width: 680px; height: 7px; background: #2c3440; border: 1px solid #39414f; }
    .stop { top: 29px; height: 33px; border: 1px solid #30343f; border-radius: 6px; background: #929292; }
    .num { top: 31px; height: 28px; border-radius: 5px; color: #2c2c2c; text-align: center; line-height: 28px; }
    .end { top: 31px; height: 28px; }
    .pct { top: 38px; line-height: 15px; font-size: 12.500px; font-weight: 300; color: #262626; }
    .wh { top: 34px; }
    .whs { top: 37px; }
    .scroll { height: 17px; margin-top: 4px; display: flex; align-items: center; padding: 0 5px 0 6px; flex: none; background: #8b8b8b; }
    .thumb { height: 13px; width: 969px; background: #737373; margin-left: 7px; }
    .la { border: 4px solid transparent; border-right-color: #555; border-left: 0; }
    .ra { border: 4px solid transparent; border-left-color: #333; border-right: 0; margin-left: auto; }
    .foot { height: 33px; display: flex; align-items: center; padding: 0 1px 0 10px; flex: none; }
    .stats { display: flex; gap: 10px; color: #2c2e36; font-size: 9.050px; line-height: 11px; text-align: center; padding-top: 2px; }
    sup { font-size: 6.500px; line-height: 0; }
    .btns { margin-left: auto; display: flex; gap: 2px; }
    .btn { height: 27px; border-radius: 14px; display: flex; align-items: center; justify-content: center; gap: 8px; font-size: 12px; font-weight: 400; color: #a0a5a9; box-shadow: 0 0 0 1px rgba(60,60,60,.35) inset; }
    .b0 { width: 85px; background: #1f446a; gap: 5px; } .b1 { width: 86px; background: #8f4013; } .b2 { width: 110px; background: #2e5c2c; } .b3 { width: 96px; background: #9c7536; color: #a89a80; box-shadow: none; }
    .tail { flex: 1; background: #959595; }
    .person { left: 622px; top: 4px; } .beye { left: 652px; top: 7px; color: #1f4a75; }
  `];
  render() {
    const at = (x: number) => `left:${x - 150}px`;
    return html`
      <div class="plan"><span class="switch"><i></i></span>PLAN<span class="grow"></span>
        <svg width="12" height="13" viewBox="0 0 12 13"><path d="M6 1v10M2 7l4 4 4-4" fill="none" stroke="#a0a6ad" stroke-width="1.600"/></svg><span class="all">ALL</span><i class="min"></i></div>
      <div class="date"><span>Timeline</span><div class="day">08/05/2020</div></div>
      <div class="hours"><div class="left">${pathIcon(P.eye, "0 0 576 512", 16, 14)}<span class="veh">Vehicles</span>
        <svg width="15" height="11" viewBox="0 0 15 11"><path d="M0 1h15M2.500 5.500h10M6 10h3" stroke="#a0a6ad" stroke-width="1.300"/></svg><i class="caret"></i></div>
        <div class="ticks">${HOURS.map(h => html`<span>${h}</span>`)}</div></div>
      <div class="chips">${["T1", "T2", "T4", "T5", "T6"].map(t => html`<span class="chip">OD58.${t}</span>`)}<span class="chip next"><i></i></span><span class="grow"></span><span class="chip more">•••</span></div>
      <div class="lane">
        <div class="grid"></div><div class="col"></div>
        <div class="eye">${pathIcon(P.eye, "0 0 576 512", 15, 13)}</div>
        <div class="meta">Bike<br>NSD007-test<br>55</div>
        <svg class="moto" width="30" height="20" viewBox="0 0 30 20" fill="none" stroke="#23262d"><circle cx="6.500" cy="13.500" r="4.800" stroke-width="2.400"/><circle cx="23.500" cy="13.500" r="4.800" stroke-width="2.400"/><path d="M4 5.500h6l2 2.500h6l2-3.500-2-2.500h4v3l3 7" stroke-width="2.400"/><path d="M8 8l4 0 7-2 2 4-4 6h-6l-3-3z" fill="#23262d"/></svg>
        <div class="dash"></div><div class="line"></div>
        ${STOPS.map(s => html`<div class="stop ${s.n ? "num" : ""} ${s.end ? "end" : ""}" style="${at(s.x)};width:${s.w}px">${s.n ?? ""}</div>
          ${s.ix ? html`<div class=${s.end ? "whs" : "wh"} style=${at(s.ix)}>${warehouse(s.end ? 16 : 23)}</div>` : ""}
          ${s.l ? html`<span class="pct" style=${at(s.l[0])}>${s.l[1]}</span>` : ""}${s.r ? html`<span class="pct" style=${at(s.r[0])}>${s.r[1]}</span>` : ""}`)}
        <svg class="person" width="22" height="22" viewBox="0 0 22 22"><rect x=".5" y=".5" width="21" height="21" rx="1" fill="#888" stroke="#666"/><circle cx="11" cy="8" r="3.800" fill="#666"/><path d="M4 18q1-6 7-6t7 6z" fill="#666"/><path d="M1 21L21 1" stroke="#777"/></svg>
        <div class="beye">${pathIcon(P.eye, "0 0 576 512", 15, 13)}</div>
      </div>
      <div class="scroll"><i class="la"></i><i class="thumb"></i><i class="ra"></i></div>
      <div class="foot"><div class="stats">${STATS.map(([a, b]) => html`<div>${a}<br>${b}</div>`)}</div>
        <div class="btns"><span class="btn b0">Actions<svg width="9" height="6" viewBox="0 0 9 6"><path d="M1 5l3.500-3.500L8 5" fill="none" stroke="currentColor" stroke-width="1.600"/></svg></span>
        <span class="btn b1">${lock}Unlock</span><span class="btn b2">${lock}Lock Route</span><span class="btn b3">${lock}Optimize</span></div></div>
      <div class="tail"></div>`;
  }
}

/* ---------- product dialog ---------- */
@customElement("product-dialog")
class ProductDialog extends LitElement {
  static styles = [base, css`
    :host { background: #fff; border-radius: 3px; overflow: hidden; display: flex; flex-direction: column; color: #222; }
    .head { height: 58px; background: #1a64b0; color: #dbe7f3; display: flex; align-items: center; padding: 0 19px 0 14px; font-size: 18.200px; }
    .head svg:first-child { width: 15px; height: 19px; margin-right: 12px; }
    .x { margin-left: auto; }
    .fields { display: grid; grid-template-columns: repeat(3, 202px); gap: 32px; padding: 22px 0 0 23px; }
    .k { font-size: 8.900px; line-height: 12px; color: #8a8a8a; padding-left: 1px; }
    .v { height: 32px; line-height: 37px; font-size: 12.500px; font-weight: 300; color: #8a8a8a; padding-left: 5px; background: repeating-linear-gradient(90deg, #aaa 0 1px, transparent 1px 3px) bottom / 100% 1px no-repeat; }
    .table { margin: 39px 21px 0 22px; font-size: 12.600px; }
    .tr { display: grid; grid-template-columns: 17px 90px 302px 90px 90px 44px 1fr; padding-left: 4px; height: 26px; align-items: center; white-space: nowrap; }
    .th { font-weight: 500; border-bottom: 1px solid #ccc; height: 27px; }
    .acts { display: flex; justify-content: flex-end; gap: 14px; padding: 47px 39px 0 0; }
    .btn { height: 30px; display: flex; align-items: center; justify-content: center; gap: 4px; font-size: 10.800px; font-weight: 500; background: #eee; width: 69px; box-shadow: 0 1px 2px rgba(0,0,0,.3); border-radius: 1px; color: #333; }
    .go { width: 86px; background: #337ab7; color: #fff; font-weight: 700; }
  `];
  render() {
    const cols = (c: string, a: string[]) => html`<div class="tr ${c}">${a.map(t => html`<span>${t}</span>`)}</div>`;
    return html`<div class="head">${icons.clip}Product List - 1 (products)<svg class="x" width="13" height="13" viewBox="0 0 13 13"><path d="M1 1l11 11M12 1L1 12" stroke="#fff" stroke-width="1.700"/></svg></div>
      <div class="fields">${[["Vehicle Code", "BRA0001"], ["Vehicle Name", "Branch 001"], ["Invoice Date", "05/08/2020"]].map(([k, v]) => html`<div><div class="k">${k}</div><div class="v">${v}</div></div>`)}</div>
      <div class="table">${cols("th", ["#", "Product Code", "Product Name", "Weight (kg)", "Volume (m3)", "Cases", "Items"])}
      ${cols("", ["1", "82281702", "DOWNY 4LX3 NMAI(9.18) DOWNY 4LX3 NMAI(9.18)", "13.090", "0.0300", "6", "1"])}</div>
      <div class="acts"><span class="btn">CANCEL</span><span class="btn go"><svg width="12" height="12" viewBox="0 0 12 12" fill="#fff"><path d="M4.600 0h2.800v4.200H10L6 8.200 2 4.200h2.600zM0 8h3l3 2.200L9 8h3v4H0z"/></svg>EXPORT</span></div>`;
  }
}

/* ---------- callouts drawn over the page ---------- */
const FRAMES = [[1598, 744, 110, 35], [515, 904, 63, 40], [701, 900, 69, 51], [883, 893, 83, 58], [1047, 898, 56, 53], [602, 366, 715, 298]];
const ARROWS = [[563, 882, 1580, 756], [772, 895, 1570, 761], [977, 908, 1567, 770], [1123, 928, 1576, 777], [1624, 733, 1341, 602]];

@customElement("app-root")
class AppRoot extends LitElement {
  static styles = [base, css`
    :host { width: 1920px; height: 1030px; position: relative; overflow: hidden; background: #858585; }
    .page { display: grid; grid-template: 45px 985px / 149px 1fr; width: 1920px; height: 1030px; }
    top-bar { grid-column: 1 / -1; }
    .main { display: flex; flex-direction: column; padding: 1px 2px 0 1px; }
    .stage { display: grid; grid-template: 738px / 1444px 324px; overflow: hidden; }
    city-map { grid-area: 1 / 1; }
    .tools { grid-area: 1 / 1; z-index: 1; display: flex; align-items: flex-start; padding: 9px 0 0 5px; overflow: hidden; box-shadow: inset 0 2px 3px rgba(0,0,0,.15); }
    .nav { display: grid; gap: 9px; }
    .btns { display: flex; height: 30px; font-size: 11px; font-weight: 700; color: #9fa6ad; line-height: 30px; width: 317px; letter-spacing: -.05px; }
    .btns > * { box-shadow: 0 1px 2px rgba(0,0,0,.35); display: flex; align-items: center; justify-content: center; }
    .a { width: 112px; background: #2d618a; gap: 5px; margin-right: 3px; border-radius: 2px; }
    .b { width: 158px; background: rgba(60,105,140,.8); }
    .c { width: 44px; background: #2d618a; }
    .layer { width: 31px; height: 31px; background: #969696; border-radius: 3px; padding: 4.500px 4px; box-shadow: 0 1px 3px rgba(0,0,0,.4); }
    .layer i { display: block; height: 22px; background: #1f446a; border-radius: 2px; }
    .type { display: flex; margin-left: 487px; height: 36px; line-height: 36px; font-size: 15.500px; color: #444; box-shadow: 0 1px 3px rgba(0,0,0,.3); }
    .type span { width: 89px; text-align: center; background: #939393; }
    .type .on { width: 63px; color: #000; background: #969696; border-right: 1px solid #898989; font-weight: 500; font-size: 15.500px; }
    .miss { margin: -5px 0 0 390px; flex: none; width: 130px; height: 31px; border: 1px solid #2b618e; border-radius: 2px; background: #959595; color: #2b618e; font-size: 11px; font-weight: 500; line-height: 30px; padding-left: 13px; letter-spacing: -.05px; box-shadow: 0 1px 2px rgba(0,0,0,.3); }
    plan-board { height: 246px; }
    product-dialog { position: absolute; z-index: 4; left: 601px; top: 364px; width: 718px; height: 301px; box-shadow: 0 8px 22px rgba(0,0,0,.55); }
    .ink { position: absolute; z-index: 5; left: 0; top: 0; filter: drop-shadow(1px 1.500px .5px rgba(0,0,0,.6)); }
  `];
  render() {
    return html`<div class="page">
      <top-bar></top-bar><side-nav></side-nav>
      <div class="main">
        <div class="stage"><city-map></city-map>
          <div class="tools">
            <div class="nav"><div class="btns"><span class="a"><svg width="11" height="10" viewBox="0 0 11 10"><path d="M5.500 1L1.500 5l4 4M1.500 5H11" fill="none" stroke="currentColor" stroke-width="1.900"/></svg>VEHICLE LIST</span><span class="b">BRANCH 001 - 05/08/2020</span><span class="c"><svg width="12" height="11" viewBox="0 0 12 11"><path d="M7 0l5 4-5 4V5.500C3.500 5.400 1.800 6.500 2.500 10 0 7 .5 2.600 7 2.500z" fill="currentColor"/></svg></span></div>
              <div class="layer"><i></i></div></div>
            <div class="type"><span class="on">Map</span><span>Satellite</span></div>
            <div class="miss">MISSING ORDERS</div>
          </div>
          <customer-panel></customer-panel>
        </div>
        <plan-board></plan-board>
      </div></div>
      <product-dialog></product-dialog>
      <svg class="ink" width="1920" height="1030" fill="none" stroke="#fe0000" stroke-width="2">
        ${FRAMES.map(([x, y, w, h]) => svg`<rect x=${x} y=${y} width=${w} height=${h} rx="3"/>`)}
        ${ARROWS.map(([a, b, c, d]) => {
          const deg = Math.atan2(d - b, c - a) * 180 / Math.PI;
          return svg`<path d="M${a} ${b}L${c} ${d}"/><path transform="translate(${c} ${d}) rotate(${deg})" d="M1 0L-11 -4.500 -9 0 -11 4.500z" fill="#fe0000" stroke="none"/>`;
        })}
      </svg>`;
  }
}
